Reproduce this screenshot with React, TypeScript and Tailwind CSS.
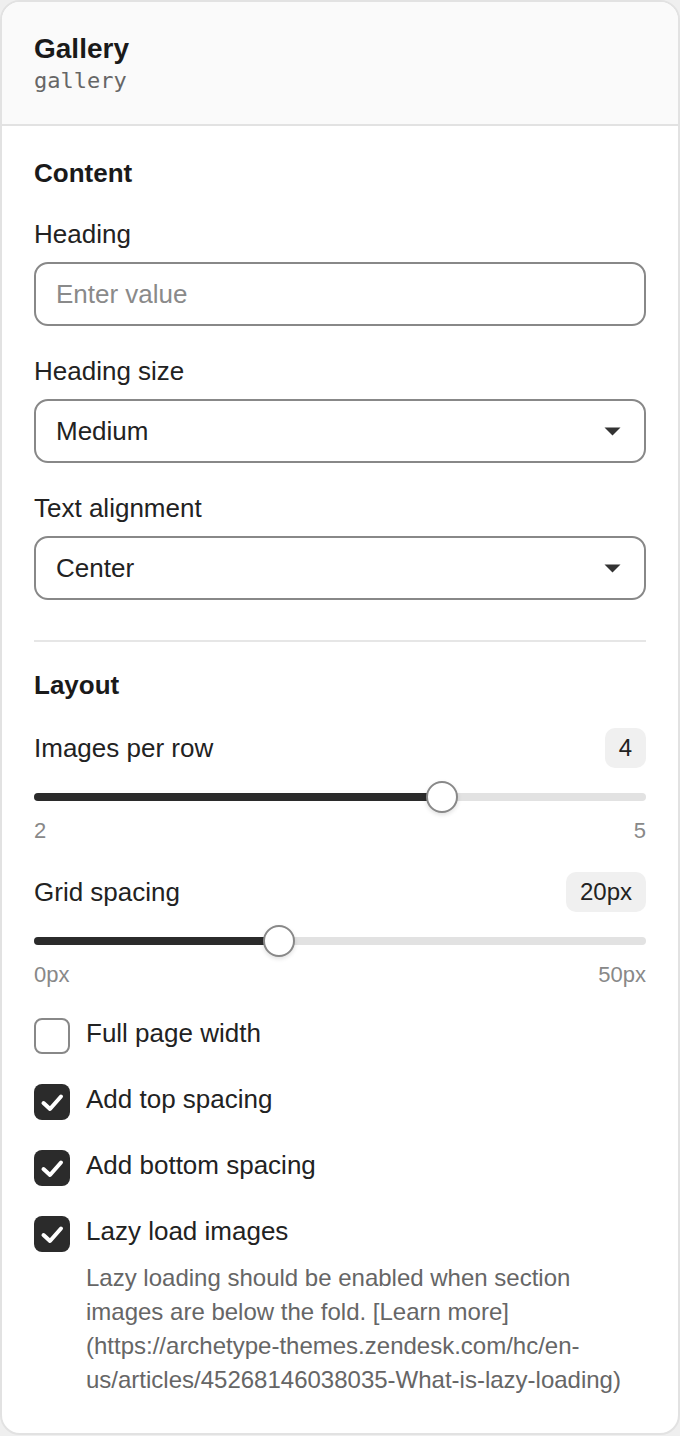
import React from 'react';

const sans = { fontFamily: '"Liberation Sans", Arial, sans-serif' };

function Field({ label, children }: { label: string; children: React.ReactNode }) {
  return (
    <div className="flex flex-col">
      <label className="text-[26px] leading-[30px] text-[#222]">{label}</label>
      <div className="mt-[13px]">{children}</div>
    </div>
  );
}

function Select({ value }: { value: string }) {
  return (
    <div className="h-16 rounded-[14px] border-2 border-[#888] bg-white px-5 flex items-center justify-between">
      <span className="text-[26px] text-[#222]">{value}</span>
      <svg width="17" height="9" viewBox="0 0 17 9" className="mr-[3px]">
        <path d="M0.5 0.5h16L8.5 8.5z" fill="#333" />
      </svg>
    </div>
  );
}

function Range({
  label,
  value,
  min,
  max,
  pct,
}: {
  label: string;
  value: string;
  min: string;
  max: string;
  pct: number;
}) {
  return (
    <div className="flex flex-col">
      <div className="flex items-center justify-between h-10">
        <span className="text-[26px] text-[#222]">{label}</span>
        <span className="rounded-[10px] bg-[#f0f0f0] px-3.5 h-10 flex items-center text-[24px] text-[#222]">
          {value}
        </span>
      </div>
      <div className="relative mt-[13px] h-8 flex items-center">
        <div className="h-2 w-full rounded-full bg-[#e2e2e2]">
          <div className="h-2 rounded-full bg-[#2b2b2b]" style={{ width: `${pct}%` }} />
        </div>
        <div
          className="absolute top-0 -ml-4 h-8 w-8 rounded-full border-2 border-[#888] bg-white shadow-[0_2px_4px_rgba(0,0,0,0.12)]"
          style={{ left: `${pct}%` }}
        />
      </div>
      <div className="mt-[5px] flex justify-between text-[22px] leading-[26px] text-[#888]">
        <span>{min}</span>
        <span>{max}</span>
      </div>
    </div>
  );
}

function Check({ label, checked, children }: { label: string; checked?: boolean; children?: React.ReactNode }) {
  return (
    <div className="flex items-start gap-4">
      {checked ? (
        <div className="h-9 w-9 shrink-0 rounded-lg bg-[#2b2b2b] flex items-center justify-center">
          <svg width="36" height="36" viewBox="0 0 36 36">
            <path d="M9.5 19l6.5 6L27 12.5" fill="none" stroke="#fff" strokeWidth="4" strokeLinecap="round" strokeLinejoin="round" />
          </svg>
        </div>
      ) : (
        <div className="h-9 w-9 shrink-0 rounded-lg border-2 border-[#888] bg-white" />
      )}
      <div className="flex flex-col">
        <span className="text-[26px] leading-[30px] text-[#222]">{label}</span>
        {children}
      </div>
    </div>
  );
}

export default function App() {
  return (
    <div className="min-h-[1436px] bg-[#efefef]" style={sans}>
      <div className="rounded-[20px] border-2 border-[#e2e2e2] bg-white overflow-hidden">
        <div className="bg-[#fafafa] border-b-2 border-[#e2e2e2] px-8 pt-[30px] pb-[30px]">
          <div className="text-[28px] leading-[34px] font-bold text-[#1a1a1a]">Gallery</div>
          <div
            className="mt-0.5 text-[22px] leading-[26px] text-[#666]"
            style={{ fontFamily: '"DejaVu Sans Mono", monospace' }}
          >
            gallery
          </div>
        </div>

        <div className="px-8 pt-[31px] pb-9">
          <div className="flex flex-col gap-[30px]">
            <h2 className="text-[26px] leading-[32px] font-bold text-[#1a1a1a]">Content</h2>
            <Field label="Heading">
              <input
                placeholder="Enter value"
                className="h-16 w-full rounded-[14px] border-2 border-[#888] bg-white px-5 text-[26px] text-[#222] placeholder:text-[#8a8a8a] outline-none"
                style={sans}
              />
            </Field>
            <Field label="Heading size">
              <Select value="Medium" />
            </Field>
            <Field label="Text alignment">
              <Select value="Center" />
            </Field>
          </div>

          <div className="mt-10 border-t-2 border-[#e6e6e6] pt-[27px] flex flex-col">
            <h2 className="text-[26px] leading-[32px] font-bold text-[#1a1a1a]">Layout</h2>
            <div className="mt-[27px] flex flex-col gap-[28px]">
              <Range label="Images per row" value="4" min="2" max="5" pct={66.667} />
              <Range label="Grid spacing" value="20px" min="0px" max="50px" pct={40} />
            </div>
            <div className="mt-[30px] flex flex-col gap-[30px]">
              <Check label="Full page width" />
              <Check label="Add top spacing" checked />
              <Check label="Add bottom spacing" checked />
              <Check label="Lazy load images" checked>
                <p className="mt-[15px] text-[24px] leading-[34px] text-[#666]">
                  Lazy loading should be enabled when section images are below the fold. [Learn more](https://archetype-themes.zendesk.com/hc/en-us/articles/45268146038035-What-is-lazy-loading)
                </p>
              </Check>
            </div>
          </div>
        </div>
      </div>
    </div>
  );
}
